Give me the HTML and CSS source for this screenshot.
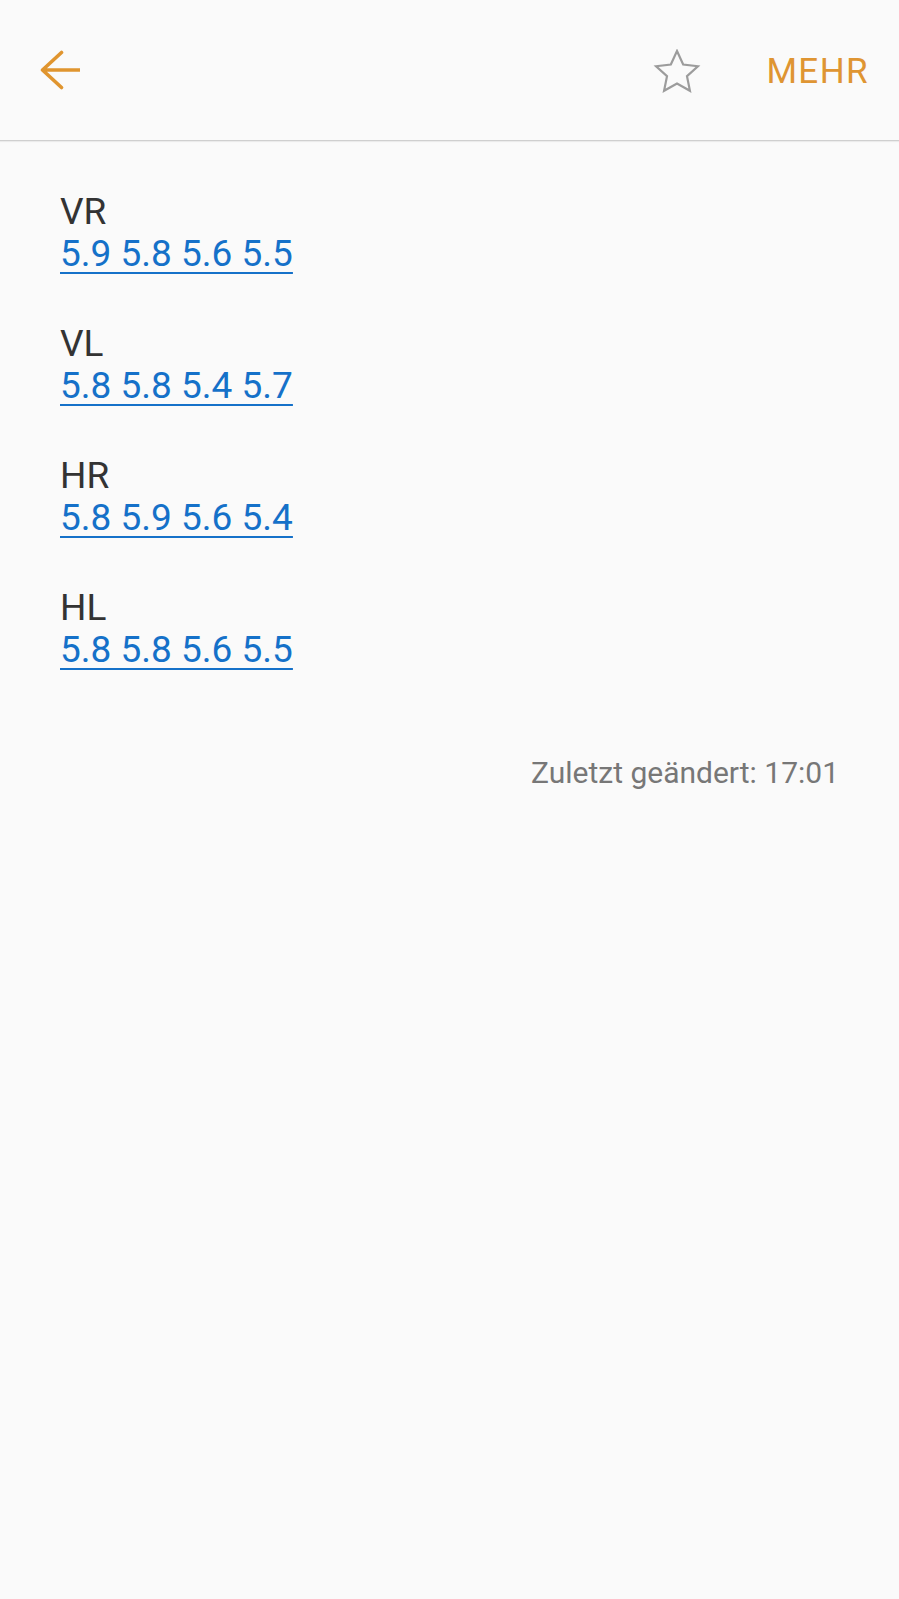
FILE: index.html
```html
<!DOCTYPE html>
<html lang="de">
<head>
<meta charset="utf-8">
<title>Notiz</title>
<link rel="stylesheet" href="styles.css">
</head>
<body>
<header class="topbar">
  <svg class="back" width="40" height="40" viewBox="0 0 40 40" aria-label="Zurück">
    <path d="M21.5 2.5 L2.5 20 L21.5 37.5 M2.5 20 H39.5" fill="none" stroke="#e0952f" stroke-width="3.6" stroke-linecap="round" stroke-linejoin="round"/>
  </svg>
  <div class="spacer"></div>
  <svg class="star" width="48" height="48" viewBox="-24 -24 48 48" aria-label="Favorit">
    <path d="M0 -22 L6.17 -8.49 L20.92 -6.8 L9.99 3.24 L12.93 17.8 L0 10.5 L-12.93 17.8 L-9.99 3.24 L-20.92 -6.8 L-6.17 -8.49 Z" fill="none" stroke="#9c9c9c" stroke-width="2.2" stroke-linejoin="miter"/>
  </svg>
  <span class="more">MEHR</span>
</header>
<main class="content">
  <div class="entries">
    <div class="entry">
      <div class="label">VR</div>
      <a class="values" href="#">5.9 5.8 5.6 5.5</a>
    </div>
    <div class="entry">
      <div class="label">VL</div>
      <a class="values" href="#">5.8 5.8 5.4 5.7</a>
    </div>
    <div class="entry">
      <div class="label">HR</div>
      <a class="values" href="#">5.8 5.9 5.6 5.4</a>
    </div>
    <div class="entry">
      <div class="label">HL</div>
      <a class="values" href="#">5.8 5.8 5.6 5.5</a>
    </div>
  </div>
  <div class="modified">Zuletzt geändert: 17:01</div>
</main>
</body>
</html>
```

FILE: styles.css
```css
html, body {
  margin: 0;
  padding: 0;
  background: #fafafa;
}

body {
  font-family: Roboto, "Noto Sans", "Liberation Sans", sans-serif;
  width: 899px;
  min-height: 1599px;
}

.topbar {
  height: 140px;
  display: flex;
  align-items: center;
  border-bottom: 1px solid #cfcfcf;
  box-shadow: 0 1px 1px rgba(0, 0, 0, 0.06);
  background: #fafafa;
}

.back {
  margin-left: 40px;
  display: block;
}

.spacer {
  flex: 1;
}

.star {
  display: block;
  margin-top: 6px;
  margin-right: 65px;
}

.more {
  font-size: 35px;
  letter-spacing: 1.4px;
  color: #df9532;
  margin-right: 30px;
  margin-top: 2px;
}

.content {
  padding: 50px 60px 0 60px;
}

.entries {
  display: flex;
  flex-direction: column;
  gap: 48px;
}

.entry {
  display: flex;
  flex-direction: column;
  align-items: flex-start;
}

.label {
  font-size: 37px;
  line-height: 42px;
  color: #333333;
}

.values {
  font-size: 37px;
  line-height: 42px;
  color: #1571c9;
  text-decoration: underline;
  text-decoration-thickness: 2px;
  text-underline-offset: 6px;
}

.modified {
  margin-top: 84px;
  text-align: right;
  font-size: 30px;
  color: #777777;
}
```
